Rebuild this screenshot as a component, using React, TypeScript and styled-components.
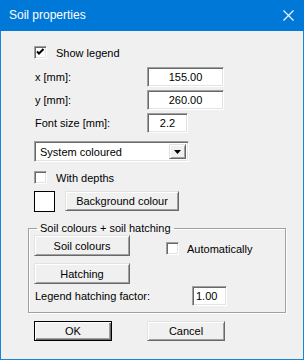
import React from 'react';
import styled, { createGlobalStyle } from 'styled-components';

const GlobalStyle = createGlobalStyle`
  html, body {
    margin: 0;
    padding: 0;
    background: #f0f0f0;
  }
  * {
    box-sizing: border-box;
  }
`;

const App = () => {
  return (
    <>
      <GlobalStyle />
      <Window>
        <TitleBar>
          <Title>Soil properties</Title>
          <CloseIcon viewBox="0 0 11 11" width="11" height="11">
            <path d="M0.5 0.5 L10.5 10.5 M10.5 0.5 L0.5 10.5" stroke="#fff" strokeWidth="1.1" fill="none" />
          </CloseIcon>
        </TitleBar>
        <Body>
          <CheckRow $top={15}>
            <CheckBox>
              <svg viewBox="0 0 9 9" width="9" height="9">
                <path d="M1 3.5 L3 5.5 L7.5 1" stroke="#000" strokeWidth="2" fill="none" />
              </svg>
            </CheckBox>
            <CheckLabel>Show legend</CheckLabel>
          </CheckRow>

          <FieldRow $top={8}>
            <FieldLabel>x [mm]:</FieldLabel>
            <TextBox $width={77} $align="center" readOnly value="155.00" />
          </FieldRow>
          <FieldRow $top={3}>
            <FieldLabel>y [mm]:</FieldLabel>
            <TextBox $width={77} $align="center" readOnly value="260.00" />
          </FieldRow>
          <FieldRow $top={3}>
            <FieldLabel>Font size [mm]:</FieldLabel>
            <TextBox $width={41} $align="center" readOnly value="2.2" />
          </FieldRow>

          <Select>
            <span>System coloured</span>
            <DropButton>
              <svg viewBox="0 0 7 4" width="7" height="4">
                <path d="M0 0 H7 L3.5 4 Z" fill="#000" />
              </svg>
            </DropButton>
          </Select>

          <CheckRow $top={9}>
            <CheckBox />
            <CheckLabel>With depths</CheckLabel>
          </CheckRow>

          <SwatchRow>
            <Swatch />
            <Button $width={114}>Background colour</Button>
          </SwatchRow>

          <Group>
            <GroupTitle>Soil colours + soil hatching</GroupTitle>
            <GroupGrid>
              <Button $width={96} $height={21}>Soil colours</Button>
              <AutoCheck>
                <CheckBox />
                <CheckLabel>Automatically</CheckLabel>
              </AutoCheck>
              <Button $width={96} $height={21}>Hatching</Button>
            </GroupGrid>
            <FactorRow>
              <FieldLabel>Legend hatching factor:</FieldLabel>
              <TextBox $width={35} $align="left" readOnly value="1.00" />
            </FactorRow>
          </Group>

          <ButtonBar>
            <Button $width={78} $default>OK</Button>
            <Button $width={78}>Cancel</Button>
          </ButtonBar>
        </Body>
      </Window>
    </>
  );
};

export default App;

const Window = styled.div`
  width: 304px;
  height: 360px;
  border: 1px solid #1883d7;
  border-top: none;
  background: #f0f0f0;
  display: flex;
  flex-direction: column;
  font-family: 'Liberation Sans', Arial, sans-serif;
  font-size: 11px;
  color: #000;
`;

const TitleBar = styled.div`
  height: 31px;
  margin: 0 -1px;
  background: #0078d7;
  display: flex;
  align-items: center;
  justify-content: space-between;
  padding: 0 10px 1px 9px;
`;

const Title = styled.span`
  color: #fff;
  font-size: 12px;
  font-family: 'Liberation Sans', Arial, sans-serif;
`;

const CloseIcon = styled.svg`
  display: block;
`;

const Body = styled.div`
  display: flex;
  flex-direction: column;
  padding-left: 33px;
`;

const CheckRow = styled.div<{ $top: number }>`
  display: flex;
  align-items: center;
  height: 13px;
  margin-top: ${(p) => p.$top}px;
`;

const CheckBox = styled.div`
  width: 13px;
  height: 13px;
  background: #fff;
  border: 1px solid;
  border-color: #a0a0a0 #fff #fff #a0a0a0;
  box-shadow: inset 1px 1px 0 #696969, inset -1px -1px 0 #e3e3e3;
  display: flex;
  align-items: center;
  justify-content: center;
  flex-shrink: 0;

  svg {
    display: block;
  }
`;

const CheckLabel = styled.span`
  margin-left: 9px;
  white-space: nowrap;
`;

const FieldRow = styled.div<{ $top: number }>`
  display: grid;
  grid-template-columns: 113px auto;
  align-items: center;
  height: 20px;
  margin-top: ${(p) => p.$top}px;
`;

const FieldLabel = styled.span`
  padding-left: 1px;
  white-space: nowrap;
`;

const TextBox = styled.input<{ $width: number; $align: 'left' | 'center' }>`
  width: ${(p) => p.$width}px;
  height: 20px;
  margin: 0;
  padding: 0 3px;
  background: #fff;
  border: 1px solid;
  border-color: #a0a0a0 #fff #fff #a0a0a0;
  box-shadow: inset 1px 1px 0 #696969, inset -1px -1px 0 #e3e3e3;
  font-family: 'Liberation Sans', Arial, sans-serif;
  font-size: 11px;
  color: #000;
  text-align: ${(p) => p.$align};
  outline: none;
`;

const Select = styled.div`
  width: 155px;
  height: 21px;
  margin-top: 8px;
  background: #fff;
  border: 1px solid;
  border-color: #a0a0a0 #fff #fff #a0a0a0;
  box-shadow: inset 1px 1px 0 #696969, inset -1px -1px 0 #e3e3e3;
  display: flex;
  align-items: center;
  justify-content: space-between;
  padding: 2px 2px 2px 5px;
`;

const DropButton = styled.div`
  width: 17px;
  height: 15px;
  background: #f0f0f0;
  border: 1px solid;
  border-color: #e3e3e3 #696969 #696969 #e3e3e3;
  box-shadow: inset 1px 1px 0 #fff, inset -1px -1px 0 #a0a0a0;
  display: flex;
  align-items: center;
  justify-content: center;

  svg {
    display: block;
  }
`;

const SwatchRow = styled.div`
  display: flex;
  align-items: flex-start;
  gap: 10px;
  margin-top: 7px;
`;

const Swatch = styled.div`
  width: 21px;
  height: 21px;
  background: #fff;
  border: 1px solid #000;
`;

const Button = styled.div<{ $width: number; $height?: number; $default?: boolean }>`
  width: ${(p) => p.$width}px;
  height: ${(p) => p.$height ?? 20}px;
  background: #f0f0f0;
  border: 1px solid;
  border-color: ${(p) => (p.$default ? '#000' : '#e3e3e3 #696969 #696969 #e3e3e3')};
  box-shadow: ${(p) =>
    p.$default
      ? 'inset 1px 1px 0 #fff, inset -1px -1px 0 #696969, inset -2px -2px 0 #a0a0a0'
      : 'inset 1px 1px 0 #fff, inset -1px -1px 0 #a0a0a0'};
  display: flex;
  align-items: center;
  justify-content: center;
  white-space: nowrap;
`;

const Group = styled.fieldset`
  width: 258px;
  margin: 10px 0 0 -6px;
  padding: 0 5px 6px 5px;
  border: 1px solid #a0a0a0;
  box-shadow: inset 1px 1px 0 #fff, 1px 1px 0 #fff;
`;

const GroupTitle = styled.legend`
  padding: 0 3px;
  margin-left: 3px;
  line-height: 13px;
`;

const GroupGrid = styled.div`
  display: grid;
  grid-template-columns: 96px auto;
  column-gap: 36px;
  row-gap: 7px;
  align-items: start;
`;

const AutoCheck = styled.div`
  display: flex;
  align-items: center;
  margin-top: 7px;

  ${CheckLabel} {
    margin-left: 8px;
  }
`;

const FactorRow = styled.div`
  display: grid;
  grid-template-columns: 158px auto;
  align-items: center;
  margin-top: 2px;
`;

const ButtonBar = styled.div`
  display: flex;
  gap: 35px;
  margin-top: 8px;
`;
